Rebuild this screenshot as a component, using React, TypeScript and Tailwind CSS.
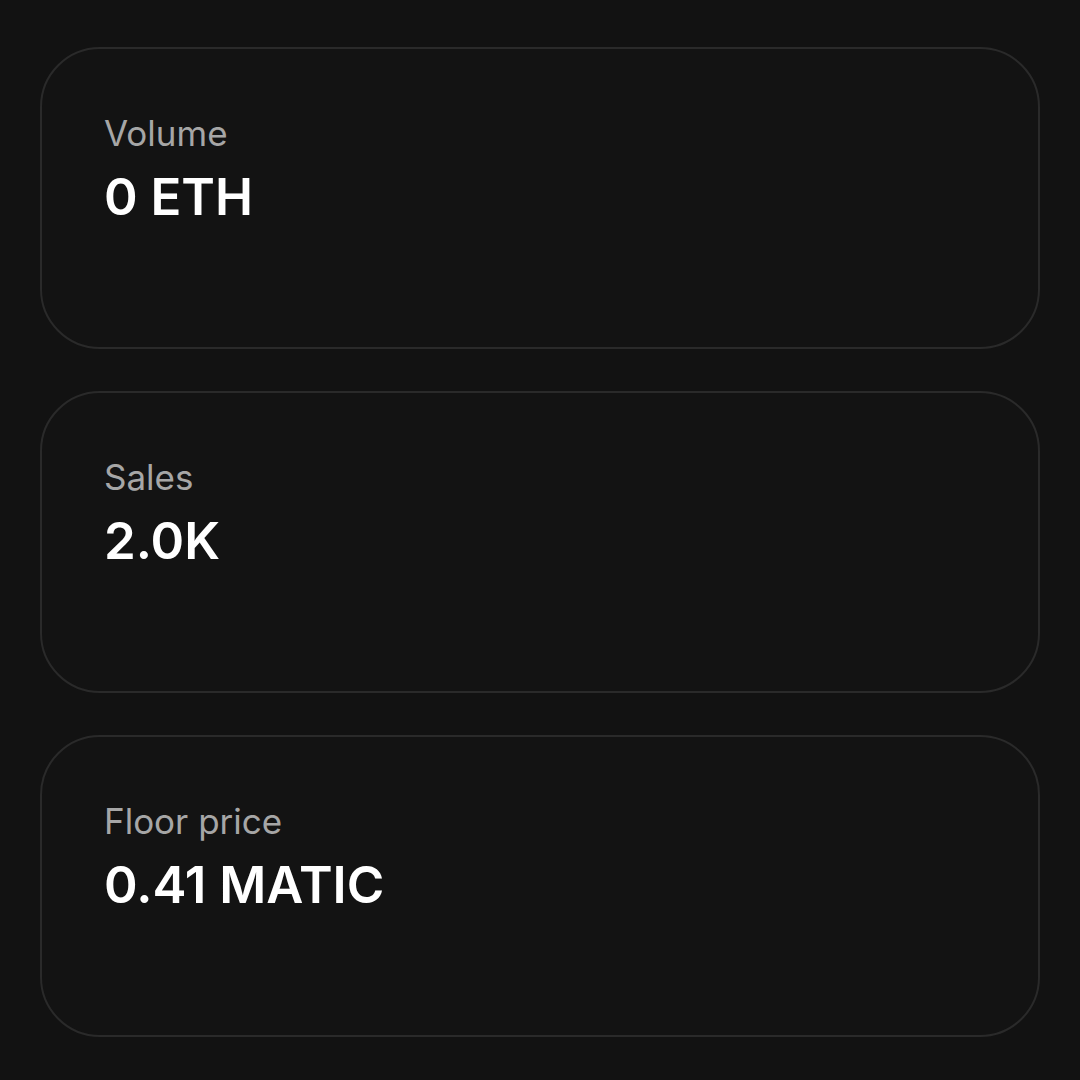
import React from 'react';

type Stat = { label: string; value: string };

const stats: Stat[] = [
    { label: 'Volume', value: '0 ETH' },
    { label: 'Sales', value: '2.0K' },
    { label: 'Floor price', value: '0.41 MATIC' },
];

const App: React.FC = () => {
    return (
        <div
            className="min-h-[1080px] w-[1080px] bg-[#121212] px-10 pt-[47px]"
            style={{ fontFamily: 'Inter, "Noto Sans", sans-serif' }}
        >
            <div className="flex flex-col gap-[42px]">
                {stats.map((stat) => (
                    <div
                        key={stat.label}
                        className="h-[302px] rounded-[60px] border-2 border-[#2a2a2a] bg-[#131313] pl-[62px] pt-[62px]"
                    >
                        <div className="text-[35px] leading-[44px] text-[#a6a6a6]">{stat.label}</div>
                        <div className="mt-[12px] text-[51px] font-semibold leading-[60px] text-white">{stat.value}</div>
                    </div>
                ))}
            </div>
        </div>
    );
};

export default App;
